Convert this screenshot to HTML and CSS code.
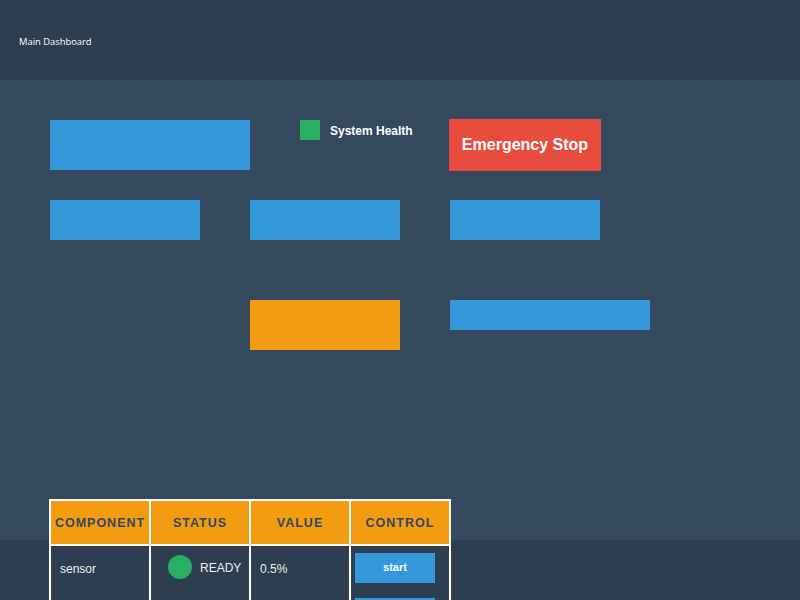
FILE: index.html
```html
<!DOCTYPE html>
<html lang="en">
<head>
<meta charset="utf-8">
<title>Main Dashboard</title>
<link rel="stylesheet" href="styles.css">
</head>
<body>
<header class="topbar"><span class="title">Main Dashboard</span></header>
<main class="canvas">
  <div class="row row-1">
    <div class="block blue c2 s4 h50"></div>
    <div class="health c7"><span class="health-dot"></span><span class="health-label">System Health</span></div>
    <button class="estop c10">Emergency Stop</button>
  </div>
  <div class="row row-2">
    <div class="block blue c2 s3 h40"></div>
    <div class="block blue c6 s3 h40"></div>
    <div class="block blue c10 s3 h40"></div>
  </div>
  <div class="row row-3">
    <div class="block orange c6 s3 h50"></div>
    <div class="block blue c10 s4 h30"></div>
  </div>
  <table class="grid-table">
    <thead>
      <tr><th>Component</th><th>Status</th><th>Value</th><th>Control</th></tr>
    </thead>
    <tbody>
      <tr>
        <td class="cell-text">sensor</td>
        <td class="cell-status"><span class="status"><span class="status-dot"></span><span class="status-text">READY</span></span></td>
        <td class="cell-text">0.5%</td>
        <td class="cell-control"><button class="ctl">start</button><button class="ctl">stop</button></td>
      </tr>
    </tbody>
  </table>
</main>
</body>
</html>
```
FILE: styles.css
```css
html, body {
  margin: 0;
  padding: 0;
}
body {
  width: 800px;
  height: 600px;
  overflow: hidden;
  font-family: "Liberation Sans", Arial, sans-serif;
  background: linear-gradient(to bottom, #34495e 0, #34495e 540px, #2c3e50 540px, #2c3e50 100%);
  color: #ecf0f1;
}
.topbar {
  height: 80px;
  background: #2c3e50;
  display: flex;
  align-items: center;
  padding-left: 19px;
  box-sizing: border-box;
}
.title {
  font-family: "Open Sans", sans-serif;
  font-size: 9.4px;
  color: #ffffff;
  position: relative;
  top: 1px;
}
.canvas {
  display: flex;
  flex-direction: column;
}
.row {
  display: grid;
  grid-template-columns: repeat(16, 50px);
  align-items: start;
}
.row-1 { margin-top: 40px; height: 50px; }
.row-2 { margin-top: 30px; height: 40px; }
.row-3 { margin-top: 60px; height: 50px; }
.c2 { grid-column-start: 2; }
.c6 { grid-column-start: 6; }
.c7 { grid-column-start: 7; }
.c10 { grid-column-start: 10; }
.s3 { grid-column-end: span 3; }
.s4 { grid-column-end: span 4; }
.h30 { height: 30px; }
.h40 { height: 40px; }
.h50 { height: 50px; }
.blue { background: #3498db; }
.orange { background: #f39c12; }
.health {
  grid-column-end: span 3;
  display: flex;
  align-items: flex-start;
  gap: 10px;
}
.health-dot {
  width: 20px;
  height: 20px;
  background: #27ae60;
  flex: none;
}
.health-label {
  font-size: 12px;
  font-weight: bold;
  color: #ffffff;
  line-height: 22px;
}
.estop {
  grid-column-end: span 3;
  width: 152px;
  height: 52px;
  margin: -1px 0 0 -1px;
  padding: 0;
  border: none;
  background: #e74c3c;
  color: #ffffff;
  font-family: "Liberation Sans", Arial, sans-serif;
  font-size: 16px;
  font-weight: bold;
}
.grid-table {
  margin: 149px 0 0 49px;
  border: 1px solid #ffffff;
  border-collapse: separate;
  border-spacing: 0;
  width: 402px;
  table-layout: fixed;
}
.grid-table th,
.grid-table td {
  border: 1px solid #ffffff;
  width: 98px;
  box-sizing: content-box;
}
.grid-table th {
  background: #f39c12;
  color: #34495e;
  font-size: 12.5px;
  font-weight: bold;
  text-transform: uppercase;
  letter-spacing: 1px;
  height: 42px;
  padding: 1px 0 0;
  text-align: center;
  white-space: nowrap;
}
.grid-table td {
  vertical-align: top;
  font-size: 12px;
  color: #ecf0f1;
}
.cell-text {
  padding: 16px 9px 0;
}
.cell-status {
  padding: 9px 0 0 17px;
}
.status {
  display: flex;
  align-items: center;
  gap: 8px;
}
.status-text {
  position: relative;
  top: 1px;
}
.status-dot {
  width: 24px;
  height: 24px;
  border-radius: 50%;
  background: #27ae60;
  flex: none;
}
.cell-control {
  padding: 7px 4px 0;
}
.ctl {
  display: block;
  width: 80px;
  height: 30px;
  margin: 0 0 15px;
  padding: 0 0 3px;
  border: none;
  background: #3498db;
  color: #ffffff;
  font-family: "Liberation Sans", Arial, sans-serif;
  font-size: 11px;
  font-weight: bold;
}
```
